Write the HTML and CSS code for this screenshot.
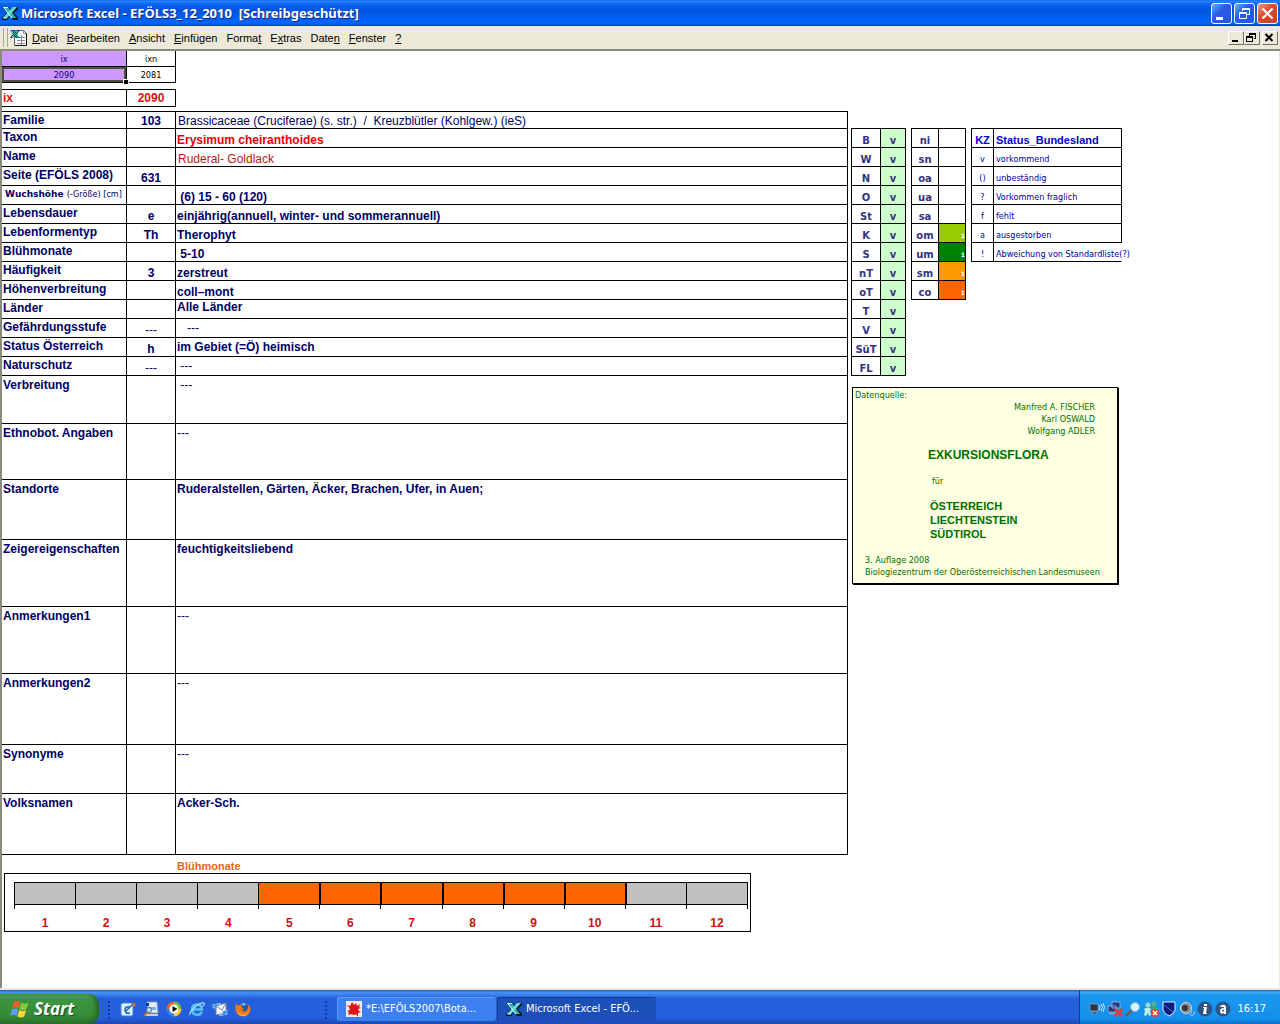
FILE: index.html
```html
<!DOCTYPE html>
<html lang="de">
<head>
  <meta charset="UTF-8">
  <meta name="viewport" content="width=device-width, initial-scale=1.0">
  <title>Microsoft Excel - EFÖLS3_12_2010</title>
  <link rel="stylesheet" href="styles.css">
</head>
<body>

  <svg class="defs" aria-hidden="true">
    <symbol id="excel" viewBox="0 0 16 16">
      <path d="M0 2h7l2 3 3-3h4v2l-4 4 4 5v2h-5l-3-4-3 4H0v-2l5-5z" fill="#001818"/>
      <path d="M1 2h5l8 11h-5z" fill="#2fb4b4"/>
      <path d="M11 2h4L5 13H1z" fill="#64dcdc"/>
      <path d="M1 2.500h5M2 3l8 10M1 13h4" stroke="#d8ffff" fill="none"/>
    </symbol>
  </svg>

  <!-- title bar -->
  <header class="titlebar">
    <svg class="icon"><use href="#excel"/></svg>
    <h1>Microsoft Excel - EFÖLS3_12_2010&nbsp; [Schreibgeschützt]</h1>
    <div class="win_btns">
      <button aria-label="Minimieren"><svg viewBox="0 0 19 19"><path d="M4 13h7v3H4z" fill="#fff"/></svg></button>
      <button aria-label="Wiederherstellen"><svg viewBox="0 0 19 19" fill="none" stroke="#fff"><path d="M7.500 7V4.500h7v6H12M7 5.500h8M4.500 8.500h7v6h-7zM4 9.500h8"/></svg></button>
      <button class="close" aria-label="Schließen"><svg viewBox="0 0 19 19"><path d="M4.500 4.500l10 10m0-10l-10 10" stroke="#fff" stroke-width="2.200"/></svg></button>
    </div>
  </header>

  <!-- menu -->
  <nav class="menubar">
    <span class="handle"></span>
    <svg class="doc_icon" viewBox="0 0 18 18">
      <path d="M4.500 1.500h9l3 3v12h-12z" fill="#fff" stroke="#667"/>
      <path d="M16.500 4v12.500H5" stroke="#111" fill="none"/>
      <path d="M13.500 1.500v3h3M7 8.500h8M7 11.500h8M7 14.500h8M11.500 6v10" stroke="#889" fill="none"/>
      <path d="M0 1h4l2 2 2-2h2L7 5l3 4H6L4 7 2 9H0l3-4z" fill="#003c3c"/>
      <path d="M1 2h2l6 6H7zM8 2L2 8" stroke="#3cc" fill="none"/>
    </svg>
    <button><u>D</u>atei</button>
    <button><u>B</u>earbeiten</button>
    <button><u>A</u>nsicht</button>
    <button><u>E</u>infügen</button>
    <button>Forma<u>t</u></button>
    <button>E<u>x</u>tras</button>
    <button>Date<u>n</u></button>
    <button><u>F</u>enster</button>
    <button><u>?</u></button>
    <div class="doc_btns">
      <button aria-label="Fenster minimieren"><svg viewBox="0 0 12 11"><path d="M3 8h6v2H3z"/></svg></button>
      <button aria-label="Fenster wiederherstellen"><svg viewBox="0 0 12 11"><path d="M4 1h7v6H9V6h1V3H5v1H4zM1 4h7v6H1zm1 2v3h5V6z" fill-rule="evenodd"/></svg></button>
      <button aria-label="Fenster schließen"><svg viewBox="0 0 12 11"><path d="M2.500 2l7 7m0-7l-7 7" stroke="#000" stroke-width="2"/></svg></button>
    </div>
  </nav>

  <!-- worksheet -->
  <main class="sheet">
    <div class="left">

      <table class="index">
        <tr><td class="lilac">ix</td><td>ixn</td></tr>
        <tr><td class="lilac selected">2090</td><td>2081</td></tr>
      </table>

      <table class="current">
        <tr><th>ix</th><td>2090</td></tr>
      </table>

      <table class="data">
        <tr class="first"><th>Familie</th><td>103</td><td class="plain">Brassicaceae (Cruciferae) (s. str.)&nbsp; /&nbsp; Kreuzblütler (Kohlgew.) (ieS)</td></tr>
        <tr><th>Taxon</th><td></td><td class="taxon">Erysimum cheiranthoides</td></tr>
        <tr><th>Name</th><td></td><td class="plain name">Ruderal- Goldlack</td></tr>
        <tr><th>Seite (EFÖLS 2008)</th><td>631</td><td></td></tr>
        <tr><th class="small">Wuchshöhe <span>(-Größe) [cm]</span></th><td></td><td>&nbsp;(6) 15 - 60 (120)</td></tr>
        <tr><th>Lebensdauer</th><td>e</td><td>einjährig(annuell, winter- und sommerannuell)</td></tr>
        <tr><th>Lebenformentyp</th><td>Th</td><td>Therophyt</td></tr>
        <tr><th>Blühmonate</th><td></td><td>&nbsp;5-10</td></tr>
        <tr><th>Häufigkeit</th><td>3</td><td>zerstreut</td></tr>
        <tr><th>Höhenverbreitung</th><td></td><td>coll–mont</td></tr>
        <tr><th>Länder</th><td></td><td class="top">Alle Länder</td></tr>
        <tr><th>Gefährdungsstufe</th><td class="none">---</td><td class="mid none">&nbsp;&nbsp; ---</td></tr>
        <tr><th>Status Österreich</th><td>h</td><td class="mid">im Gebiet (=Ö) heimisch</td></tr>
        <tr><th>Naturschutz</th><td class="none">---</td><td class="mid none">&nbsp;---</td></tr>
        <tr class="tall t48"><th>Verbreitung</th><td></td><td class="none">&nbsp;---</td></tr>
        <tr class="tall t56"><th>Ethnobot. Angaben</th><td></td><td class="none">---</td></tr>
        <tr class="tall t60"><th>Standorte</th><td></td><td>Ruderalstellen, Gärten, Äcker, Brachen, Ufer, in Auen;</td></tr>
        <tr class="tall t67"><th>Zeigereigenschaften</th><td></td><td>feuchtigkeitsliebend</td></tr>
        <tr class="tall t67"><th>Anmerkungen1</th><td></td><td class="none">---</td></tr>
        <tr class="tall t71"><th>Anmerkungen2</th><td></td><td class="none">---</td></tr>
        <tr class="tall t49"><th>Synonyme</th><td></td><td class="none">---</td></tr>
        <tr class="tall t61"><th>Volksnamen</th><td></td><td>Acker-Sch.</td></tr>
      </table>

      <section class="months">
        <h2>Blühmonate</h2>
        <div class="chart">
          <ol>
            <li>1</li>
            <li>2</li>
            <li>3</li>
            <li>4</li>
            <li class="on">5</li>
            <li class="on">6</li>
            <li class="on">7</li>
            <li class="on">8</li>
            <li class="on">9</li>
            <li class="on">10</li>
            <li>11</li>
            <li>12</li>
          </ol>
        </div>
      </section>
    </div>

    <div class="right">
      <div class="keys">
        <table class="key laender">
          <tr><th>B</th><td>v</td></tr>
          <tr><th>W</th><td>v</td></tr>
          <tr><th>N</th><td>v</td></tr>
          <tr><th>O</th><td>v</td></tr>
          <tr><th>St</th><td>v</td></tr>
          <tr><th>K</th><td>v</td></tr>
          <tr><th>S</th><td>v</td></tr>
          <tr><th>nT</th><td>v</td></tr>
          <tr><th>oT</th><td>v</td></tr>
          <tr><th>T</th><td>v</td></tr>
          <tr><th>V</th><td>v</td></tr>
          <tr><th>SüT</th><td>v</td></tr>
          <tr><th>FL</th><td>v</td></tr>
        </table>

        <table class="key stufen">
          <tr><th>ni</th><td></td></tr>
          <tr><th>sn</th><td></td></tr>
          <tr><th>oa</th><td></td></tr>
          <tr><th>ua</th><td></td></tr>
          <tr><th>sa</th><td></td></tr>
          <tr><th>om</th><td class="lime">1</td></tr>
          <tr><th>um</th><td class="green">1</td></tr>
          <tr><th>sm</th><td class="amber">1</td></tr>
          <tr><th>co</th><td class="orange">1</td></tr>
        </table>

        <table class="key status">
          <tr><th>KZ</th><th>Status_Bundesland</th></tr>
          <tr><td>v</td><td>vorkommend</td></tr>
          <tr><td>()</td><td>unbeständig</td></tr>
          <tr><td>?</td><td>Vorkommen fraglich</td></tr>
          <tr><td>f</td><td>fehlt</td></tr>
          <tr><td>a</td><td>ausgestorben</td></tr>
          <tr><td>!</td><td class="open">Abweichung von Standardliste(?)</td></tr>
        </table>
      </div>

      <aside class="source">
        <p>Datenquelle:</p>
        <p class="authors">Manfred A. FISCHER<br>Karl OSWALD<br>Wolfgang ADLER</p>
        <div class="book">
          <h2>EXKURSIONSFLORA</h2>
          <p>für</p>
          <h3>ÖSTERREICH<br>LIECHTENSTEIN<br>SÜDTIROL</h3>
        </div>
        <p class="edition">3. Auflage 2008<br>Biologiezentrum der Oberösterreichischen Landesmuseen</p>
      </aside>
    </div>
  </main>

  <!-- taskbar -->
  <footer class="taskbar">
    <button class="start">
      <svg viewBox="0 0 18 17">
        <path d="M3 2q3-2 6 0L7.500 8q-3-2-6 0z" fill="#f0602c"/>
        <path d="M10 2.500q3 2 7 0L15 8.500q-3 2-6.500 0z" fill="#86cc3c"/>
        <path d="M1.300 9q3-2 6 0L5.800 15q-3-2-6 0z" fill="#5c9cf4"/>
        <path d="M8.300 9.500q3 2 6.500 0L13 15.500q-3 2-6.500 0z" fill="#fcd43c"/>
      </svg>
      Start
    </button>
    <span class="grip"></span>
    <div class="quick">
      <a href="#" aria-label="Desktop anzeigen"><svg viewBox="0 0 16 16"><rect x="1" y="2" width="12" height="13" rx="2" fill="#dff0fc" stroke="#3a8ad0"/><path d="M10 6q-5-1-5 3t5 3M6 10l7-7" stroke="#1a64b4" stroke-width="1.500" fill="none"/><path d="M12 4l2-3 2 3-2 2z" fill="#d86820"/></svg></a>
      <a href="#" aria-label="Suchen"><svg viewBox="0 0 16 16"><path d="M4 1h10l1 11H5z" fill="#e4ecf4" stroke="#8ca0b8"/><path d="M5 6h8v3H5z" fill="#78b0e8"/><path d="M3 14h12" stroke="#d8d0b8" stroke-width="2"/><path d="M1 15l5-5" stroke="#d87830" stroke-width="2"/><circle cx="6" cy="9" r="2.500" fill="#c4e4fc" stroke="#567"/><path d="M3 2h3v3H3z" fill="#1830a0"/></svg></a>
      <a href="#" aria-label="Media Player"><svg viewBox="0 0 16 16"><path d="M8 8V.5A7.500 7.500 0 0 1 15.500 8z" fill="#6cc040"/><path d="M8 8h7.500A7.500 7.500 0 0 1 8 15.500z" fill="#fcc428"/><path d="M8 8v7.500A7.500 7.500 0 0 1 .5 8z" fill="#3884e4"/><path d="M8 8H.5A7.500 7.500 0 0 1 8 .5z" fill="#f06428"/><circle cx="8" cy="8" r="4.500" fill="#fff"/><path d="M6.500 5l5 3-5 3z" fill="#111"/></svg></a>
      <a href="#" aria-label="Internet Explorer"><svg viewBox="0 0 16 16" fill="none"><path d="M13 11q-2 3-5 3-5-1-5-5.500T8 3.500q5 0 5 5H4" stroke="#5cc0f8" stroke-width="2.500"/><path d="M1 14Q0 11 6 6t9-4q1 1-1 3" stroke="#a8e0ff" stroke-width="1.200"/></svg></a>
      <a href="#" aria-label="Outlook Express"><svg viewBox="0 0 16 16"><path d="M4 5l10-3v10L4 14z" fill="#f4f8fc" stroke="#789"/><path d="M4 5l6 4 4-7" stroke="#789" fill="none"/><path d="M1 7V3l2 1q3-3 6-1-3 0-4 3l1 1zM15 9v5l-2-1q-3 3-6 1 3 0 4-3l-1-1z" fill="#3c90e0" stroke="#dceefc" stroke-width=".5"/></svg></a>
      <a href="#" aria-label="Firefox"><svg viewBox="0 0 16 16"><circle cx="8" cy="8" r="6" fill="#2458a8"/><path d="M6 3q3-2 5 0L9 5z" fill="#80c0f0"/><path d="M1 2l2 3q2-2 4-1L6 6l3 1-2 2q2 3 5 0 2-3 0-6 4 2 3.500 6.500Q14 15 8 15.500 1 15 .5 8 .5 4 1 2z" fill="#f07818"/><path d="M2 10q2 4 6 4t6-4q-1 5-6 5t-6-5z" fill="#fcb830"/></svg></a>
    </div>
    <span class="grip"></span>
    <div class="tasks">
      <button>
        <svg viewBox="0 0 16 16"><path d="M0 0h16v16H0z" fill="#f4e8e8"/><path d="M6 1l2 3 2-2 1 3 3-2-1 3 2 1-3 1 1 2 2 1-3 1v4l-2-3-2 1-3-1-3 1 1-3-2-1 3-1-1-3-3-2 4 1z" fill="#dc1414"/></svg>
        *E:\EFÖLS2007\Bota...
      </button>
      <button class="active">
        <svg><use href="#excel"/></svg>
        Microsoft Excel - EFÖ...
      </button>
    </div>
    <div class="tray">
      <svg viewBox="0 0 16 16"><path d="M1 3h8v7H1zM3 11h5v2H3z" fill="#26344c" stroke="#9ab" stroke-width=".7"/><path d="M10 4q2 2 0 5M12 3q3 3 0 7M14 2q3 4 0 9" stroke="#c8ecff" fill="none"/></svg>
      <svg viewBox="0 0 16 16"><path d="M5 1h8v6H5zM1 5h8v6H1zM3 12h5v1H3z" fill="#203c84" stroke="#a4b8d0" stroke-width=".8"/><path d="M8 8l7 7m0-7l-7 7" stroke="#e43c30" stroke-width="2.500"/></svg>
      <svg viewBox="0 0 16 16"><path d="M1 15l6-6" stroke="#6c5a58" stroke-width="2.500"/><circle cx="10" cy="6" r="4.500" fill="#d8f4ff" stroke="#6cb4f0"/></svg>
      <svg viewBox="0 0 16 16"><circle cx="5" cy="4" r="2.500" fill="#9cd8c4"/><circle cx="11" cy="3" r="2.500" fill="#4cb490"/><path d="M1 8q4-3 7 0l-1 2 1 4-2 1-1-3-2 3-2-1 1-4z" fill="#c4ecdc"/><path d="M8 6q4-2 7 1l-1 3-4 3-2-4z" fill="#3ca480"/><circle cx="12" cy="12" r="4" fill="#e04828"/><path d="M10 10l4 4m0-4l-4 4" stroke="#fff" stroke-width="1.300"/></svg>
      <svg viewBox="0 0 16 16"><path d="M2 1h12v8q-1 4-6 6-5-2-6-6z" fill="#0c1c84" stroke="#e8f0fc"/><path d="M3 4l9 7" stroke="#4468c8"/></svg>
      <svg viewBox="0 0 16 16"><circle cx="7" cy="7" r="5.500" fill="#8c8c90" stroke="#d8d8dc"/><circle cx="6" cy="7" r="3" fill="#34383c"/><path d="M10 14q3-1 3-4M12 15q4-1 4-5" stroke="#a8c8e8" fill="none"/></svg>
      <svg viewBox="0 0 16 16"><circle cx="8" cy="8" r="7.500" fill="#2c5484"/><path d="M7 3h3v2H7zM6 6h4l-1 6h1v1H6l1-6H6z" fill="#fff"/></svg>
      <svg viewBox="0 0 16 16"><circle cx="8" cy="8" r="7.500" fill="#2c5484"/><path d="M5 5q5-3 6 1v7H9v-1q-4 2-4-2 0-3 4-3 0-2-4-1zM9 8.500q-2 0-2 1.500t2 0z" fill="#fff" fill-rule="evenodd"/></svg>
      <time>16:17</time>
    </div>
  </footer>

</body>
</html>
```
FILE: styles.css
```css
*, *::before, *::after {
  box-sizing: border-box;
}

body {
  margin: 0;
  min-height: 100vh;
  display: flex;
  flex-direction: column;
  background: #ece9d8;
  font: 11px/14px "DejaVu Sans Condensed", "Liberation Sans", sans-serif;
  color: #000;
}

h1, h2, h3, p, ol {
  margin: 0;
  padding: 0;
}

button {
  font: inherit;
  color: inherit;
  border: 0;
  padding: 0;
  background: none;
}

.defs {
  position: absolute;
  width: 0;
  height: 0;
}

/* title bar */
.titlebar {
  display: flex;
  align-items: center;
  height: 26px;
  padding: 0 2px;
  background: linear-gradient(#0058e6, #2a8cff 1px, #0a62f0 4px, #0054e0 10px, #0462f8 20px, #0466fc 23px, #0040c0);
}

.titlebar .icon {
  width: 16px;
  height: 16px;
  margin-right: 3px;
}

.titlebar h1 {
  flex: 1;
  font: bold 13px/20px "Noto Sans", sans-serif;
  color: #fff;
  text-shadow: 1px 1px #0a2a84;
}

.win_btns {
  display: flex;
  gap: 2px;
}

.win_btns button {
  width: 21px;
  height: 21px;
  border: 1px solid #fff;
  border-radius: 3px;
  background: linear-gradient(135deg, #7ca4f8, #2c5ce0 40%, #2058e0);
}

.win_btns .close {
  background: linear-gradient(135deg, #f09c84, #dc5030 40%, #c83c18);
}

.win_btns svg {
  display: block;
  width: 19px;
  height: 19px;
}

/* menu */
.menubar {
  display: flex;
  align-items: center;
  height: 25px;
  padding: 0 2px 0 3px;
  border-bottom: 2px solid #8c8a7c;
}

.menubar .handle {
  width: 5px;
  height: 19px;
  border: solid #aca899;
  border-width: 0 1px;
}

.doc_icon {
  width: 18px;
  height: 18px;
  margin-left: 2px;
}

.menubar > button {
  padding: 0 5px 0 4px;
  font-family: "Liberation Sans", sans-serif;
}

.doc_btns {
  display: flex;
  margin-left: auto;
}

.doc_btns button {
  width: 16px;
  height: 14px;
  border: 1px solid;
  border-color: #fff #716f64 #716f64 #fff;
}

.doc_btns button:last-child {
  margin-left: 2px;
}

.doc_btns svg {
  display: block;
  width: 12px;
  height: 11px;
}

/* worksheet */
.sheet {
  flex: 1;
  display: flex;
  align-items: flex-start;
  gap: 3px;
  border-left: 2px solid #8c8a7c;
  border-right: 1px solid #ece9d8;
  background: #fff;
  margin-bottom: 2px;
}

.left {
  flex: 0 1 846px;
}

table {
  border-collapse: separate;
  border-spacing: 0;
  table-layout: fixed;
}

th, td {
  padding: 0;
  border: solid #000;
  border-width: 0 1px 1px 0;
  white-space: nowrap;
}

.index {
  width: 174px;
  font: 9px/14px "DejaVu Sans Condensed", sans-serif;
  text-align: center;
}

.index td {
  height: 16px;
}

.index td:first-child {
  width: 125px;
}

.lilac {
  background: #cc99ff;
  color: #000080;
}

.selected {
  position: relative;
  box-shadow: inset 0 0 0 2px #4c5440;
}

.selected::after {
  content: "";
  position: absolute;
  right: -3px;
  bottom: -3px;
  width: 6px;
  height: 6px;
  border: 1px solid #fff;
  background: #000;
}

.current {
  width: 174px;
  margin: 6px 0 4px;
  font: bold 12px/15px "Liberation Sans", sans-serif;
  color: #e01010;
}

.current th, .current td {
  height: 18px;
  border-top-width: 1px;
}

.current th {
  width: 125px;
  padding-left: 1px;
  text-align: left;
}

.current td {
  text-align: center;
}

.data {
  width: 100%;
  font: bold 12px/13px "Liberation Sans", sans-serif;
  color: #000066;
}

.data th, .data td {
  height: 19px;
}

.data .first th, .data .first td {
  height: 18px;
  border-top-width: 1px;
}

.data th {
  width: 125px;
  padding-left: 1px;
  line-height: 17px;
  text-align: left;
  vertical-align: top;
}

.data .first th {
  line-height: 16px;
}

.data td {
  padding-left: 1px;
  vertical-align: bottom;
}

.data td:nth-child(2) {
  width: 49px;
  padding: 0;
  text-align: center;
}

.data .plain {
  padding-left: 2px;
  font-weight: normal;
}

.data .none {
  font-weight: normal;
}

.data .taxon {
  color: #e80000;
}

.data .name {
  color: #b81818;
}

.data .small {
  font: bold 9px/17px "DejaVu Sans", sans-serif;
  padding-left: 3px;
}

.data .small span {
  font-family: "DejaVu Sans Condensed", sans-serif;
  font-weight: normal;
}

.data .top {
  line-height: 15px;
  vertical-align: top;
}

.data .mid {
  vertical-align: middle;
}

.data .tall th, .data .tall td {
  padding-top: 1px;
  line-height: 17px;
  vertical-align: top;
}

.data .t48 th { height: 48px; }
.data .t49 th { height: 49px; }
.data .t56 th { height: 56px; }
.data .t60 th { height: 60px; }
.data .t61 th { height: 61px; }
.data .t67 th { height: 67px; }
.data .t71 th { height: 71px; }

/* flowering months */
.months h2 {
  padding: 4px 0 0 175px;
  font: bold 11px/14px "Liberation Sans", sans-serif;
  color: #e86818;
}

.chart {
  width: 747px;
  max-width: 100%;
  height: 59px;
  margin-left: 2px;
  padding: 8px 2px 0 9px;
  border: 1px solid #000;
}

/* the cell borders run 4px below the bar as ticks */
.chart ol {
  display: grid;
  grid-template-columns: repeat(12, 1fr);
  grid-auto-rows: 27px;
  list-style: none;
  border-right: 1px solid #000;
  font: bold 12px/15px "Liberation Sans", sans-serif;
  color: #d01010;
  text-align: center;
}

.chart li {
  border-left: 1px solid #000;
}

.chart li::before {
  content: "";
  display: block;
  height: 23px;
  margin-bottom: 11px;
  border: solid #000;
  border-width: 1px 0;
  background: #c0c0c0;
}

.chart .on::before {
  background: #ff6600;
}

.chart .on + li::before {
  border-left-width: 1px;
}

/* keys */
.right {
  padding-top: 77px;
}

.keys {
  display: flex;
  align-items: flex-start;
  gap: 5px;
  height: 248px;
}

.key {
  font: 9px/13px "DejaVu Sans Condensed", sans-serif;
  color: #0000a0;
  border-left: 1px solid #000;
}

.key th, .key td {
  height: 19px;
  text-align: center;
  vertical-align: bottom;
}

.key tr:first-child > * {
  height: 20px;
  border-top-width: 1px;
}

.laender, .stufen {
  width: 55px;
  font: bold 10px/13px "DejaVu Sans", sans-serif;
  color: #333380;
}

.laender th {
  width: 29px;
}

.laender td {
  background: #ccffcc;
}

.stufen th {
  width: 27px;
}

.key.stufen td {
  font-size: 6px;
  text-align: right;
  color: #fff;
}

.lime { background: #99cc00; }
.green { background: #008000; }
.amber { background: #ff9900; }
.orange { background: #ff6600; }

.status {
  width: 151px;
}

.status th {
  font: bold 11px/13px "Liberation Sans", sans-serif;
  color: #0000d0;
}

.status tr > :first-child {
  width: 22px;
}

.status tr > :last-child {
  padding-left: 2px;
  text-align: left;
}

.status .open {
  border-right-color: transparent;
}

/* source note */
.source {
  width: 266px;
  margin: 11px 0 0 1px;
  padding: 1px 2px 5px;
  border: 1px solid #000;
  box-shadow: 1px 1px #000;
  background: #ffffe1;
  font: 9px/12px "DejaVu Sans Condensed", sans-serif;
  color: #007000;
}

.authors {
  padding-right: 20px;
  text-align: right;
}

.book {
  padding: 10px 0 13px 73px;
}

.book h2 {
  font: bold 12px/16px "Liberation Sans", sans-serif;
}

.book p {
  padding: 12px 0 12px 4px;
}

.book h3 {
  padding-left: 2px;
  font: bold 11px/14px "Liberation Sans", sans-serif;
}

.edition {
  padding-left: 10px;
  white-space: nowrap;
}

/* taskbar */
.taskbar {
  display: flex;
  align-items: stretch;
  height: 34px;
  background: linear-gradient(#1c50b8, #4890f4 2px, #3a80ec 5px, #2560dc 8px, #245edc 28px, #1c48b0);
  color: #fff;
}

.start {
  display: flex;
  align-items: center;
  gap: 4px;
  width: 99px;
  margin-top: 4px;
  padding-left: 10px;
  border-radius: 0 10px 10px 0;
  background: linear-gradient(#60b060, #3c963c 5px, #388c38 20px, #2c742c);
  box-shadow: inset -3px 0 4px #246424;
  font: italic bold 17px/20px "Open Sans", sans-serif;
  text-shadow: 1px 1px 1px #1c441c;
}

.start svg {
  width: 20px;
  height: 18px;
}

.grip {
  width: 5px;
  margin: 10px 8px 5px;
  background: radial-gradient(circle, #123c9c 1px, transparent 1px) 0 0 / 4px 4px;
}

.quick {
  display: flex;
  align-items: center;
  gap: 7px;
  width: 196px;
  padding-top: 4px;
}

.quick a, .quick svg {
  display: block;
  width: 16px;
  height: 16px;
}

.tasks {
  display: flex;
  gap: 1px;
  padding: 7px 0 3px;
}

.tasks button {
  display: flex;
  align-items: center;
  gap: 4px;
  width: 159px;
  padding-left: 9px;
  border-radius: 3px;
  background: #3c80f0;
  box-shadow: inset 1px 1px #5c9cf8;
}

.tasks .active {
  background: #1c50b8;
  box-shadow: inset 1px 1px #143c90;
}

.tasks svg {
  width: 16px;
  height: 16px;
}

.tray {
  display: flex;
  align-items: center;
  gap: 2px;
  margin-left: auto;
  padding: 4px 14px 0 9px;
  border-left: 1px solid #0c3c98;
  background: linear-gradient(#1c50b8, #40b0f8 2px, #1c98f0 5px, #1490ec 28px, #1070c8);
}

.tray svg {
  width: 16px;
  height: 16px;
}

.tray time {
  margin-left: 4px;
}
```
